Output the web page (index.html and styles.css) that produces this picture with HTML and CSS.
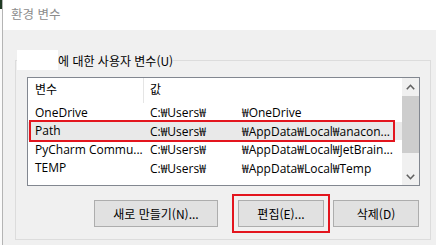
FILE: index.html
```html
<!DOCTYPE html>
<html lang="ko">
<head>
<meta charset="utf-8">
<link rel="stylesheet" href="styles.css">
</head>
<body>
<div class="screen">
  <div class="edge"><div class="edge-top"></div></div>
  <div class="window">
    <div class="titlebar">환경 변수</div>
    <div class="content">
      <fieldset class="group">
        <legend class="group-label"><span class="redact"></span><span>에 대한 사용자 변수(U)</span></legend>
        <div class="group-body">
          <div class="listbox">
            <div class="list">
              <div class="row head"><div class="c-name">변수</div><div class="c-val">값</div></div>
              <div class="row"><div class="c-name">OneDrive</div><div class="c-val"><span class="v1">C:₩Users₩</span><span>₩OneDrive</span></div></div>
              <div class="row sel"><div class="c-name">Path</div><div class="c-val"><span class="v1">C:₩Users₩</span><span>₩AppData₩Local₩anacon...</span></div></div>
              <div class="row"><div class="c-name">PyCharm Commu...</div><div class="c-val"><span class="v1">C:₩Users₩</span><span>₩AppData₩Local₩JetBrain...</span></div></div>
              <div class="row"><div class="c-name">TEMP</div><div class="c-val"><span class="v1">C:₩Users₩</span><span>₩AppData₩Local₩Temp</span></div></div>
            </div>
            <div class="scrollbar">
              <div class="arrow"><svg width="9" height="6" viewBox="0 0 9 6"><polyline points="0.8,5.2 4.5,1.3 8.2,5.2" fill="none" stroke="#606060" stroke-width="1.6"/></svg></div>
              <div class="thumb"></div>
              <div class="track"></div>
              <div class="arrow"><svg width="9" height="6" viewBox="0 0 9 6"><polyline points="0.8,0.8 4.5,4.7 8.2,0.8" fill="none" stroke="#606060" stroke-width="1.6"/></svg></div>
            </div>
          </div>
          <div class="buttons">
            <div class="btn b-new">새로 만들기(N)...</div>
            <div class="btn b-edit">편집(E)...</div>
            <div class="btn b-del">삭제(D)</div>
          </div>
        </div>
      </fieldset>
    </div>
  </div>
</div>
</body>
</html>
```

FILE: styles.css
```css
* { box-sizing: border-box; }
html, body { margin: 0; padding: 0; }
body {
  width: 436px;
  height: 245px;
  overflow: hidden;
  background: #f0f0f0;
  font-family: "Open Sans", "Noto Sans CJK KR", sans-serif;
  font-size: 12px;
  color: #000;
}
.screen {
  display: flex;
  height: 245px;
}
.edge {
  width: 3px;
  background: #fafafa;
  border-right: 1px solid #b4b4b4;
}
.edge-top {
  height: 9px;
  background: #203a24;
}
.window {
  flex: 1;
  display: flex;
  flex-direction: column;
}
.titlebar {
  height: 30px;
  background: #fff;
  color: #8c8c8c;
  font-family: "Noto Sans CJK KR", sans-serif;
  font-size: 12.5px;
  line-height: 28px;
  padding-left: 8px;
}
.content {
  flex: 1;
  background: #f0f0f0;
  padding: 20px 0 0 12px;
}
.group {
  margin: 0;
  padding: 0;
  width: 416px;
  height: 190px;
  border: 1px solid #dcdcdc;
  min-width: 0;
}
.group-label {
  margin-left: 1px;
  padding: 0;
  display: flex;
  align-items: center;
  height: 20px;
  font-family: "Noto Sans CJK KR", sans-serif;
  font-size: 12px;
}
.redact {
  width: 41px;
  height: 20px;
  background: #fff;
}
.group-body {
  padding: 7px 10px 0 11px;
}
.listbox {
  height: 109px;
  border: 1px solid #828790;
  background: #fff;
  display: flex;
}
.list {
  flex: 1;
  min-width: 0;
}
.row {
  display: flex;
  height: 18.5px;
  align-items: center;
  white-space: nowrap;
  position: relative;
}
.row.head {
  height: 25px;
  align-items: stretch;
}
.row.head .c-name {
  border-right: 1px solid #e5e5e5;
  font-family: "Noto Sans CJK KR", sans-serif;
}
.row.head .c-val {
  font-family: "Noto Sans CJK KR", sans-serif;
}
.row.head > div {
  display: flex;
  align-items: center;
  padding-bottom: 4px;
}
.c-name {
  width: 116px;
  padding-left: 7px;
  overflow: hidden;
}
.c-val {
  flex: 1;
  padding-left: 6px;
  overflow: hidden;
}
.v1 {
  display: inline-block;
  width: 92px;
}
.row.sel {
  background: #e9e9e9;
}
.row.sel::after {
  content: "";
  position: absolute;
  left: 1px;
  right: 7px;
  top: -1.5px;
  bottom: -1.5px;
  border: 2px solid #e3151e;
}
.scrollbar {
  width: 17px;
  background: #f0f0f0;
  display: flex;
  flex-direction: column;
}
.arrow {
  height: 17px;
  display: flex;
  align-items: center;
  justify-content: center;
}
.thumb {
  margin-top: 1px;
  height: 57px;
  background: #cdcdcd;
}
.track { flex: 1; }
.buttons {
  display: flex;
  justify-content: flex-end;
  margin-top: 14px;
  margin-right: 1px;
}
.btn {
  height: 27px;
  background: #e1e1e1;
  border: 1px solid #adadad;
  display: flex;
  align-items: center;
  justify-content: center;
  font-family: "Noto Sans CJK KR", sans-serif;
  font-size: 12px;
}
.b-new { width: 124px; }
.b-edit {
  width: 86px;
  margin-left: 20px;
  outline: 2px solid #e3151e;
  outline-offset: 4px;
}
.b-del {
  width: 86px;
  margin-left: 9px;
}
```
